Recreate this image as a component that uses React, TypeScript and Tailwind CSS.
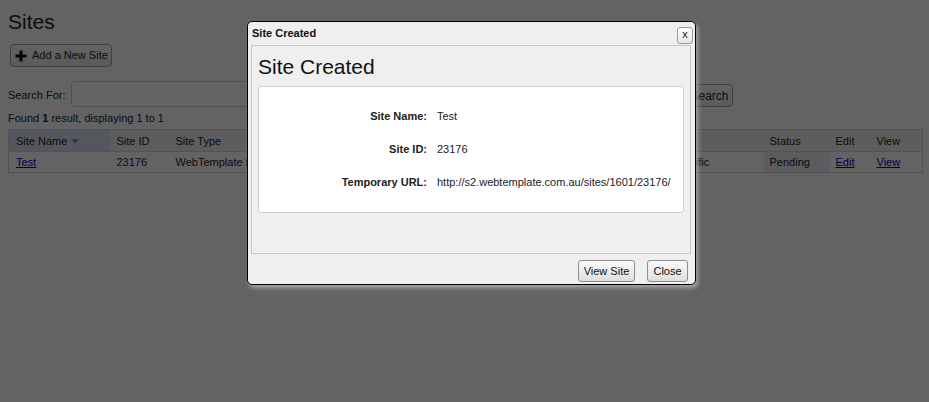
import React from "react";

const font = "font-['Liberation_Sans',Arial,Helvetica,sans-serif]";

function DlgButton({ children, w }: { children: React.ReactNode; w: string }) {
  return (
    <button
      className={`${w} h-[22px] rounded-[3px] border border-[#8d8d8d] bg-gradient-to-b from-[#fafafa] to-[#dedede] text-[11px] text-[#111] leading-none flex items-center justify-center`}
    >
      {children}
    </button>
  );
}

export default function App() {
  return (
    <div className={`relative w-[929px] h-[402px] overflow-hidden bg-white text-[11px] text-[#222] ${font}`}>
      {/* Page content */}
      <div className="px-2 pt-[10px]">
        <h1 className="text-[21px] leading-[24px] text-[#222]">Sites</h1>
        <button className="mt-[10px] ml-[2px] w-[102px] h-[23px] rounded-[4px] border border-[#a8a8a8] bg-gradient-to-b from-white to-[#e9e9e9] flex items-center gap-[5px] pl-[4px] text-[11px] text-[#222] whitespace-nowrap">
          <svg width="12" height="12" viewBox="0 0 12 12" className="shrink-0">
            <rect x="4.5" y="0.5" width="3" height="11" fill="#111" />
            <rect x="0.5" y="4.5" width="11" height="3" fill="#111" />
          </svg>
          <span>Add a New Site</span>
        </button>
        <div className="mt-[14px] flex items-center h-[26px]">
          <span className="w-[63px] text-[11px] pt-[2px]">Search For:</span>
          <div className="w-[611px] h-[26px] rounded-[3px] border border-[#cfcfcf] bg-white" />
          <button className="ml-[4px] w-[47px] h-[23px] mt-[3px] rounded-[4px] border border-[#a8a8a8] bg-gradient-to-b from-white to-[#e9e9e9] text-[12px]">
            Search
          </button>
        </div>
        <div className="mt-[4px] h-[14px] leading-[14px] text-[11px]">
          Found <b>1</b> result, displaying 1 to 1
        </div>
        <table className="mt-[4px] table-fixed border-collapse border border-[#d2d2d2] w-[914px] text-[11px]">
          <colgroup>
            <col className="w-[101px]" />
            <col className="w-[59px]" />
            <col className="w-[252px]" />
            <col className="w-[224px]" />
            <col className="w-[119px]" />
            <col className="w-[66px]" />
            <col className="w-[41px]" />
            <col className="w-[52px]" />
          </colgroup>
          <thead>
            <tr className="h-[22px] bg-[#f0f0f0] border-b border-[#d2d2d2] text-left">
              <th className="font-normal pl-[7px] pt-[1px] bg-[#d8e3f1]">
                <span className="inline-flex items-center gap-[4px]">
                  Site Name
                  <svg width="8" height="5" viewBox="0 0 8 5">
                    <path d="M0 0 L8 0 L4 5 Z" fill="#7f93ad" />
                  </svg>
                </span>
              </th>
              <th className="font-normal pl-[7px] pt-[1px]">Site ID</th>
              <th className="font-normal pl-[7px] pt-[1px]">Site Type</th>
              <th className="font-normal pl-[7px]"></th>
              <th className="font-normal pl-[7px]"></th>
              <th className="font-normal pl-[6px] pt-[1px]">Status</th>
              <th className="font-normal pl-[6px] pt-[1px]">Edit</th>
              <th className="font-normal pl-[6px] pt-[1px]">View</th>
            </tr>
          </thead>
          <tbody>
            <tr className="h-[21px] bg-white">
              <td className="pl-[7px]">
                <a className="text-[#0000cc] underline">Test</a>
              </td>
              <td className="pl-[7px]">23176</td>
              <td className="pl-[7px] whitespace-nowrap overflow-hidden">WebTemplate Lite</td>
              <td className="pl-[7px]"></td>
              <td className="pl-[6px] whitespace-nowrap">Not Specific</td>
              <td className="pl-[6px] bg-[#e7eef6]">Pending</td>
              <td className="pl-[6px]">
                <a className="text-[#0000cc] underline">Edit</a>
              </td>
              <td className="pl-[6px]">
                <a className="text-[#0000cc] underline">View</a>
              </td>
            </tr>
          </tbody>
        </table>
      </div>

      {/* Modal overlay */}
      <div className="absolute inset-0 bg-black/[0.61]" />

      {/* Dialog */}
      <div className="absolute left-[247px] top-[21px] w-[449px] h-[264px] rounded-[5px] border border-black bg-[#efefef] shadow-[2px_3px_4px_rgba(175,175,175,0.85)] flex flex-col">
        <div className="h-[23px] flex items-start justify-between">
          <span className="pl-[4px] pt-[5px] text-[11px] font-bold leading-[13px] text-[#111]">Site Created</span>
          <button className="mt-[5px] mr-[2px] w-[16px] h-[17px] rounded-[3px] border border-[#9a9a9a] bg-gradient-to-b from-white to-[#e4e4e4] text-[11px] leading-none flex items-center justify-center pb-[2px] text-[#222]">
            x
          </button>
        </div>
        <div className="ml-[3px] mr-[4px] h-[209px] border border-[#c8c8c8] bg-[#efefef] px-[6px] pt-[9px]">
          <h2 className="text-[21px] leading-[24px] text-[#111]">Site Created</h2>
          <div className="mt-[7px] h-[127px] rounded-[3px] border border-[#cfcfcf] bg-white pt-[13px]">
            {[
              ["Site Name:", "Test"],
              ["Site ID:", "23176"],
              ["Temporary URL:", "http://s2.webtemplate.com.au/sites/1601/23176/"],
            ].map(([k, v]) => (
              <div key={k} className="h-[33px] flex items-center gap-[10px] text-[11px]">
                <span className="w-[168px] text-right font-bold text-[#222]">{k}</span>
                <span className="text-[#222]">{v}</span>
              </div>
            ))}
          </div>
        </div>
        <div className="mt-[6px] mr-[7px] flex justify-end gap-[12px]">
          <DlgButton w="w-[57px]">View Site</DlgButton>
          <DlgButton w="w-[41px]">Close</DlgButton>
        </div>
      </div>
    </div>
  );
}
